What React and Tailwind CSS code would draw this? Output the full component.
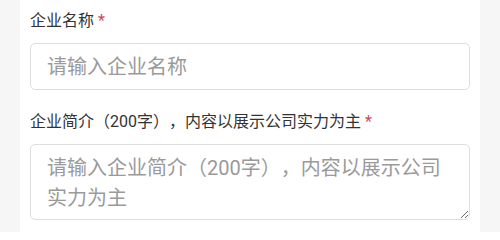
import React from 'react';

const font = { fontFamily: 'Roboto, "Noto Sans CJK SC", "Noto Sans", sans-serif' };

function Label({ children }) {
  return (
    <div className="h-6 leading-6 text-[16px] text-[#333333]">
      {children}
      <span className="ml-1 text-[#d2475c]">*</span>
    </div>
  );
}

export default function App() {
  return (
    <div
      className="w-[500px] h-[232px] bg-[#f6f6f6] overflow-hidden [text-spacing-trim:space-all]"
      style={font}
    >
      <div className="mx-5 h-full bg-white px-[10px] pt-[9px]">
        <Label>企业名称</Label>
        <input
          type="text"
          placeholder="请输入企业名称"
          className="mt-[10px] block w-full h-[47px] rounded-[5px] border border-[#dedede] px-4 text-[20px] text-[#333333] placeholder:text-[#9a9a9a] outline-none [text-spacing-trim:space-all]"
        />
        <div className="mt-5">
          <Label>企业简介（200字），内容以展示公司实力为主</Label>
        </div>
        <textarea
          placeholder="请输入企业简介（200字），内容以展示公司实力为主"
          className="mt-[10px] block w-full h-[76px] rounded-[5px] border border-[#dedede] px-4 pt-2 text-[20px] leading-[30px] text-[#333333] placeholder:text-[#9a9a9a] outline-none resize-y [text-spacing-trim:space-all]"
        />
      </div>
    </div>
  );
}
